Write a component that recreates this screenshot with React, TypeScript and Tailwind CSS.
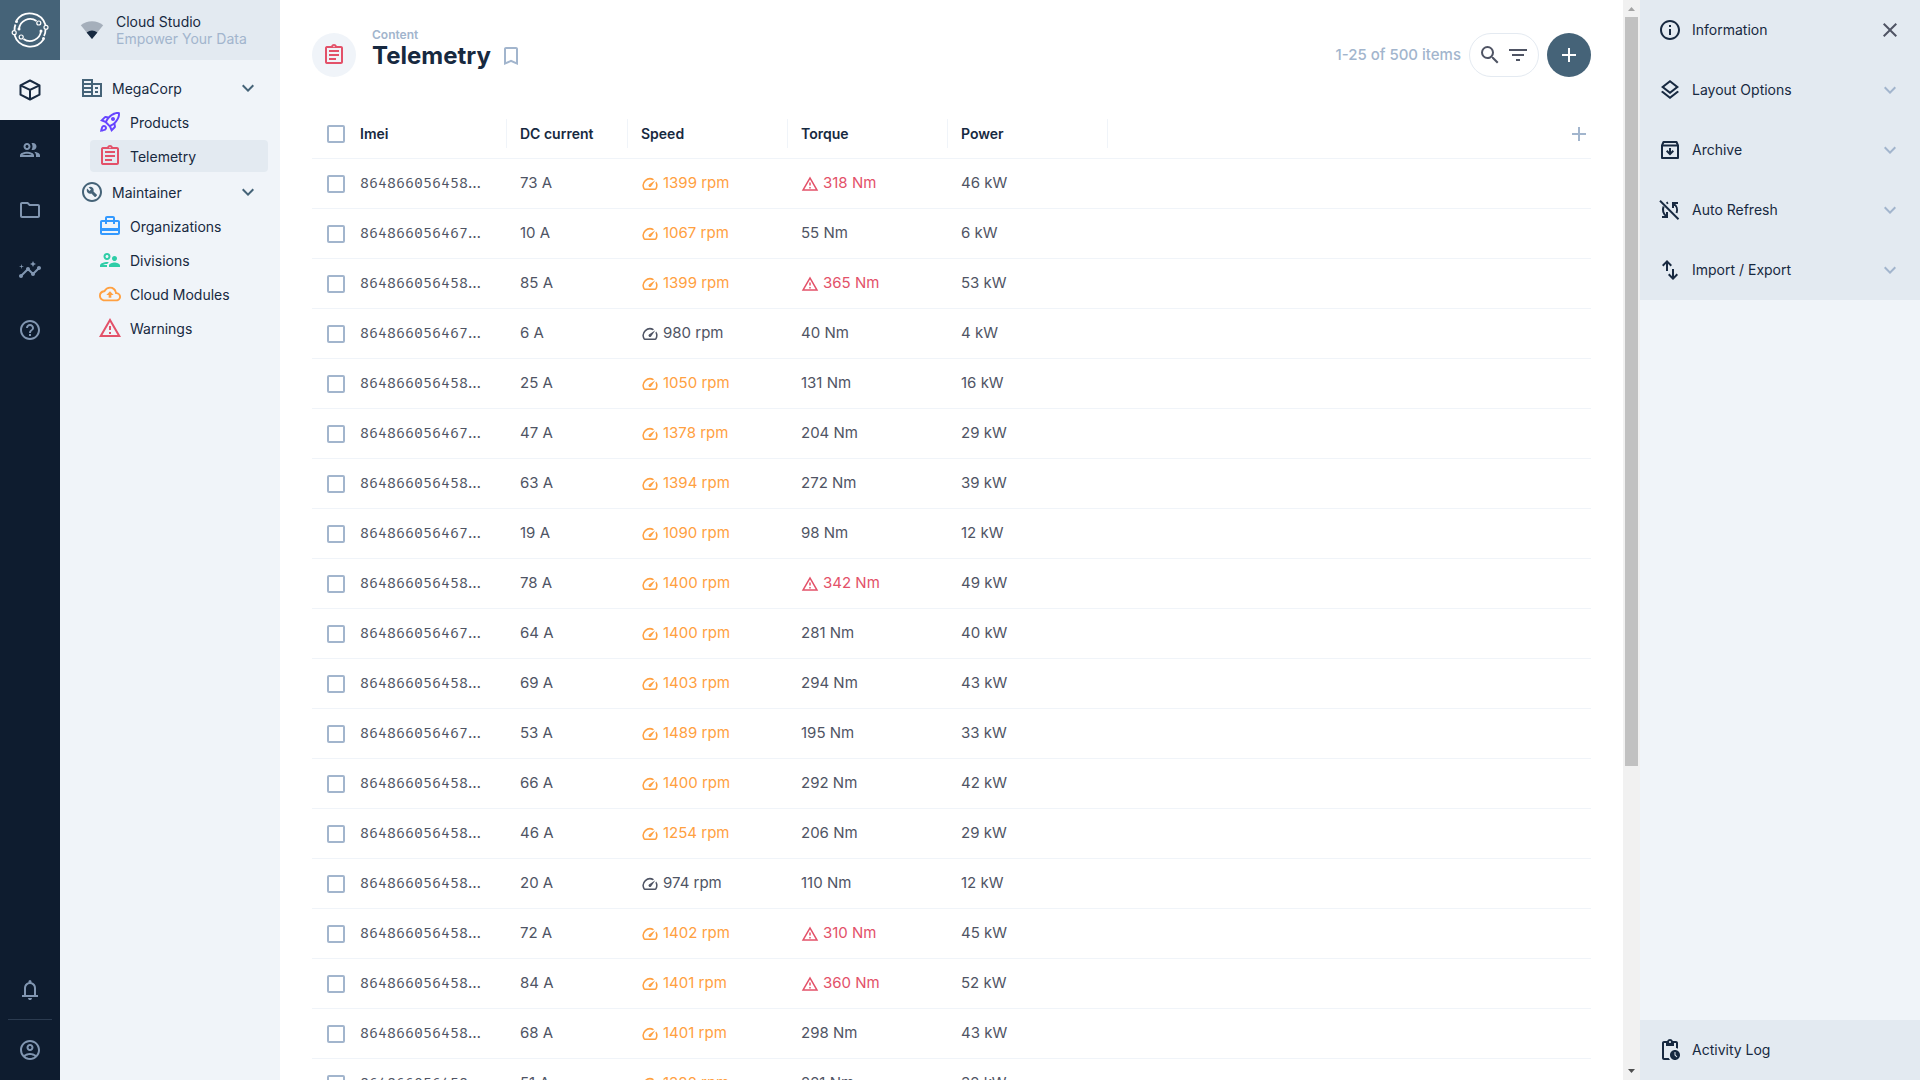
import type { ReactNode } from 'react'
import {
  MdAdd, MdBookmarkBorder, MdCardTravel, MdClose, MdExpandMore, MdFilterList, MdHelpOutline, MdInsights,
  MdOutlineAccountCircle, MdOutlineAssignment, MdOutlineBackup, MdOutlineBuildCircle,
  MdOutlineFolder, MdOutlineInfo, MdOutlineLayers, MdOutlinePendingActions, MdOutlinePeople,
  MdOutlineRocketLaunch, MdOutlineSpeed, MdOutlineSupervisorAccount, MdOutlineWarningAmber, MdSearch,
} from 'react-icons/md'
import { clsx } from 'clsx'

interface Reading {
  imei: string
  current: number
  speed: number
  torque: number
  power: number
}

const SPEED_LIMIT = 1000
const TORQUE_LIMIT = 300

const READINGS: Reading[] = [
  { imei: '864866056458', current: 73, speed: 1399, torque: 318, power: 46 },
  { imei: '864866056467', current: 10, speed: 1067, torque: 55, power: 6 },
  { imei: '864866056458', current: 85, speed: 1399, torque: 365, power: 53 },
  { imei: '864866056467', current: 6, speed: 980, torque: 40, power: 4 },
  { imei: '864866056458', current: 25, speed: 1050, torque: 131, power: 16 },
  { imei: '864866056467', current: 47, speed: 1378, torque: 204, power: 29 },
  { imei: '864866056458', current: 63, speed: 1394, torque: 272, power: 39 },
  { imei: '864866056467', current: 19, speed: 1090, torque: 98, power: 12 },
  { imei: '864866056458', current: 78, speed: 1400, torque: 342, power: 49 },
  { imei: '864866056467', current: 64, speed: 1400, torque: 281, power: 40 },
  { imei: '864866056458', current: 69, speed: 1403, torque: 294, power: 43 },
  { imei: '864866056467', current: 53, speed: 1489, torque: 195, power: 33 },
  { imei: '864866056458', current: 66, speed: 1400, torque: 292, power: 42 },
  { imei: '864866056458', current: 46, speed: 1254, torque: 206, power: 29 },
  { imei: '864866056458', current: 20, speed: 974, torque: 110, power: 12 },
  { imei: '864866056458', current: 72, speed: 1402, torque: 310, power: 45 },
  { imei: '864866056458', current: 84, speed: 1401, torque: 360, power: 52 },
  { imei: '864866056458', current: 68, speed: 1401, torque: 298, power: 43 },
  { imei: '864866056458', current: 51, speed: 1382, torque: 221, power: 32 },
]

function Glyph({ children }: { children: ReactNode }) {
  return (
    <svg viewBox="0 0 24 24" className="size-6 shrink-0" fill="none" stroke="currentColor" strokeWidth="2" aria-hidden="true">
      {children}
    </svg>
  )
}

function BoxIcon() {
  return (
    <Glyph>
      <path d="M12 2.500 21.500 7.300v9.400l-9.500 4.800-9.500-4.800V7.300z" strokeLinejoin="round" />
      <path d="M2.500 7.300 12 12l9.500-4.700M12 12v9.500" />
    </Glyph>
  )
}

// Left block has full-width floors, right block has an open wall with two windows.
function OfficeIcon() {
  return (
    <Glyph>
      <path d="M3 4h9v16H3zM12 8h9v12h-9M3 8h9M3 12h9M3 16h9" />
      <path d="M15 12h3M15 16h3" />
    </Glyph>
  )
}

function BellIcon() {
  return (
    <Glyph>
      <path
        fill="currentColor"
        stroke="none"
        d="M4 19v-2h2v-7q0-2.075 1.250-3.687T10.500 4.200v-.7q0-.625.438-1.062T12 2t1.063.438T13.500 3.500v.7q2 .5 3.250 2.113T18 10v7h2v2zm8 3q-.825 0-1.412-.587T10 20h4q0 .825-.587 1.413T12 22m-4-5h8v-7q0-1.650-1.175-2.825T12 6T9.175 7.175T8 10z"
      />
    </Glyph>
  )
}

function ArchiveIcon() {
  return (
    <Glyph>
      <path d="M4 7.500V20h16V7.500L18.500 4h-13z" strokeLinejoin="round" />
      <path d="M4 7.500h16" />
      <path d="M12 10v6M8.700 12.800l3.300 3.300 3.300-3.300" />
    </Glyph>
  )
}

function SyncOffIcon() {
  return (
    <Glyph>
      <path d="M2 2.800 20.500 21.300" />
      <path d="M20 5h-5v5M15.300 5.500A8 8 0 0 1 18.600 15M4 19h5v-5M8.700 18.500A8 8 0 0 1 5.600 8.500" />
      <path d="M8.500 5.300l1.500-.8" />
    </Glyph>
  )
}

function ImportExportIcon() {
  return (
    <Glyph>
      <path
        fill="currentColor"
        stroke="none"
        d="M8 13V5.825L5.425 8.400 4 7l5-5 5 5-1.425 1.400L10 5.825V13zm7 9l-5-5 1.425-1.400L14 18.175V11h2v7.175l2.575-2.575L20 17z"
      />
    </Glyph>
  )
}

function SignalIcon() {
  return (
    <svg viewBox="0 0 24 24" className="size-6 shrink-0" fill="#172940" aria-hidden="true">
      <path opacity="0.3" d="M12 21 .8 7.300C4 4.600 8 3.200 12 3.200s8 1.400 11.200 4.100z" />
      <path d="M12 21 6.600 14.500a9 9 0 0 1 10.800 0z" />
    </svg>
  )
}

function Logo() {
  return (
    <svg viewBox="0 0 40 40" className="size-10" fill="none" stroke="#fff" aria-hidden="true">
      <g strokeWidth="1.800">
        <path d="M6.500 10.500A16.300 16.300 0 0 1 35.500 15" />
        <path d="M33.500 29.500A16.300 16.300 0 0 1 4.500 25" />
        <path d="M9 19A11.200 11.200 0 0 1 26.500 11" />
        <path d="M31 21A11.200 11.200 0 0 1 13.500 29" />
        <path d="M4.500 20.500q0-4 1-6M35.500 19.500q0 4-1.500 6.500" />
      </g>
      <g strokeWidth="1.200" fill="#456378">
        <circle cx="28.800" cy="13" r="2" />
        <circle cx="36" cy="17.300" r="2" />
        <circle cx="11.200" cy="27" r="2" />
        <circle cx="4.200" cy="22.700" r="2" />
      </g>
      <g fill="#fff" stroke="none">
        <circle cx="6.500" cy="11.500" r="1.500" />
        <circle cx="33.500" cy="28.500" r="1.500" />
        <circle cx="9" cy="19" r="1.500" />
        <circle cx="31" cy="21" r="1.500" />
      </g>
    </svg>
  )
}

function RailButton({ label, active, children }: { label: string; active?: boolean; children: ReactNode }) {
  return (
    <button
      aria-label={label}
      className={clsx(
        'flex size-15 items-center justify-center',
        active ? 'bg-[#f0f4f9] text-[#172940]' : 'text-[#8196b1]'
      )}
    >
      {children}
    </button>
  )
}

function ModuleRail() {
  return (
    <aside className="flex w-15 shrink-0 flex-col bg-[#0e1c2f]">
      <a href="#home" aria-label="Home" className="flex size-15 items-center justify-center bg-[#456378]">
        <Logo />
      </a>
      <RailButton label="Content" active><BoxIcon /></RailButton>
      <RailButton label="Users"><MdOutlinePeople size={24} /></RailButton>
      <RailButton label="Files"><MdOutlineFolder size={24} /></RailButton>
      <RailButton label="Insights"><MdInsights size={24} /></RailButton>
      <RailButton label="Help"><MdHelpOutline size={24} /></RailButton>
      <div className="mt-auto">
        <RailButton label="Notifications"><BellIcon /></RailButton>
        <hr className="mx-2 -mt-px border-[#2b3b50]" />
        <RailButton label="Account"><MdOutlineAccountCircle size={24} /></RailButton>
      </div>
    </aside>
  )
}

function NavGroup({ icon, label, children }: { icon: ReactNode; label: string; children: ReactNode }) {
  return (
    <li>
      <button className="flex h-8 w-full items-center gap-2 px-2 text-left">
        <span className="text-[#456378]">{icon}</span>
        <span className="flex-1 pt-0.5">{label}</span>
        <MdExpandMore size={24} className="text-[#456378]" />
      </button>
      <ul className="mt-0.5 flex flex-col gap-0.5 pl-[18px]">{children}</ul>
    </li>
  )
}

function NavLink({ icon, label, active }: { icon: ReactNode; label: string; active?: boolean }) {
  return (
    <li>
      <a href={`#${label}`} className={clsx('flex h-8 items-center gap-2 rounded px-2', active && 'bg-[#e3eaf1]')}>
        <span className="flex w-6 justify-center">{icon}</span>
        <span className="pt-0.5">{label}</span>
      </a>
    </li>
  )
}

function Navigation() {
  return (
    <nav className="w-55 shrink-0 bg-[#f0f4f9] text-sm text-[#172940]">
      <div className="flex h-15 items-center gap-3 bg-[#e3eaf1] px-5">
        <SignalIcon />
        <div className="leading-[17px]">
          <div>Cloud Studio</div>
          <div className="text-[#a2b5cd]">Empower Your Data</div>
        </div>
      </div>
      <ul className="flex flex-col gap-1 p-3">
        <NavGroup icon={<OfficeIcon />} label="MegaCorp">
          <NavLink icon={<MdOutlineRocketLaunch size={24} className="text-[#6644ff]" />} label="Products" />
          <NavLink icon={<MdOutlineAssignment size={24} className="text-[#e35169]" />} label="Telemetry" active />
        </NavGroup>
        <NavGroup icon={<MdOutlineBuildCircle size={24} />} label="Maintainer">
          <NavLink icon={<MdCardTravel size={24} className="text-[#3399ff]" />} label="Organizations" />
          <NavLink icon={<MdOutlineSupervisorAccount size={24} className="text-[#2ecda7]" />} label="Divisions" />
          <NavLink icon={<MdOutlineBackup size={22} className="text-[#ffa041]" />} label="Cloud Modules" />
          <NavLink icon={<MdOutlineWarningAmber size={24} className="text-[#e35169]" />} label="Warnings" />
        </NavGroup>
      </ul>
    </nav>
  )
}

function PageHeader() {
  return (
    <header className="flex h-11 items-center">
      <div className="flex size-11 items-center justify-center rounded-full bg-[#f0f4f9] text-[#e35169]">
        <MdOutlineAssignment size={24} />
      </div>
      <div className="ml-4 pb-3">
        <div className="mb-px text-xs font-semibold leading-3 text-[#a2b5cd]">Content</div>
        <div className="flex items-center gap-2">
          <h1 className="text-2xl font-bold leading-7 text-[#172940]">Telemetry</h1>
          <button aria-label="Bookmark" className="text-[#a2b5cd]">
            <MdBookmarkBorder size={24} />
          </button>
        </div>
      </div>
      <span className="ml-auto text-[15px] font-medium text-[#a2b5cd]">1-25 of 500 items</span>
      <div className="ml-2 flex h-11 items-center gap-1 rounded-full border border-[#e4eaf1] px-2 text-[#4f5464]">
        <button aria-label="Search"><MdSearch size={24} /></button>
        <button aria-label="Filter"><MdFilterList size={24} /></button>
      </div>
      <button aria-label="Create item" className="ml-2 flex size-11 items-center justify-center rounded-full bg-[#456378] text-white">
        <MdAdd size={24} />
      </button>
    </header>
  )
}

function Checkbox({ label }: { label: string }) {
  return (
    <input
      type="checkbox"
      aria-label={label}
      className="block size-[18px] appearance-none rounded-xs border-2 border-[#a2b5cd] bg-white"
    />
  )
}

function ColumnHead({ label }: { label: string }) {
  return (
    <th scope="col" className="border-b border-[#f0f4f9] p-0 pr-px text-left font-semibold">
      <div className="flex h-[29px] items-center border-r border-[#f0f4f9] pl-3">{label}</div>
    </th>
  )
}

function Cell({ children }: { children?: ReactNode }) {
  return <td className="border-b border-[#f0f4f9] py-0 pl-3">{children}</td>
}

function TelemetryTable() {
  return (
    <table className="mt-8 w-full table-fixed border-separate border-spacing-0 text-[15px] text-[#4f5464]">
      <colgroup>
        <col className="w-9" />
        <col className="w-40" />
        <col className="w-[121px]" />
        <col className="w-40" />
        <col className="w-40" />
        <col className="w-40" />
        <col />
      </colgroup>
      <thead>
        <tr className="h-[50px] text-sm text-[#172940]">
          <th className="border-b border-[#f0f4f9] p-0 pl-[15px]"><Checkbox label="Select all" /></th>
          <ColumnHead label="Imei" />
          <ColumnHead label="DC current" />
          <ColumnHead label="Speed" />
          <ColumnHead label="Torque" />
          <ColumnHead label="Power" />
          <th className="border-b border-[#f0f4f9] p-0">
            <button aria-label="Add field" className="ml-auto block text-[#a2b5cd]">
              <MdAdd size={24} />
            </button>
          </th>
        </tr>
      </thead>
      <tbody>
        {READINGS.map((row, i) => (
          <tr key={i} className="h-[50px]">
            <td className="border-b border-[#f0f4f9] p-0 pl-[15px]"><Checkbox label={`Select row ${i + 1}`} /></td>
            <Cell>
              <span className="font-['Fira_Mono','DejaVu_Sans_Mono',monospace]">{row.imei}</span>…
            </Cell>
            <Cell>{row.current} A</Cell>
            <Cell>
              <div className={clsx('flex items-center gap-1', row.speed > SPEED_LIMIT && 'text-[#ffa041]')}>
                <MdOutlineSpeed size={18} />
                {row.speed} rpm
              </div>
            </Cell>
            <Cell>
              <div className={clsx('flex items-center gap-1', row.torque > TORQUE_LIMIT && 'text-[#e35169]')}>
                {row.torque > TORQUE_LIMIT && <MdOutlineWarningAmber size={18} />}
                {row.torque} Nm
              </div>
            </Cell>
            <Cell>{row.power} kW</Cell>
            <Cell />
          </tr>
        ))}
      </tbody>
    </table>
  )
}

function ScrollTrack() {
  return (
    <div className="flex w-[17px] shrink-0 flex-col items-center bg-[#f1f1f1]">
      <svg viewBox="0 0 17 17" className="h-[17px] w-full shrink-0" aria-hidden="true">
        <path d="M5 11h7L8.500 7z" fill="#a3a3a3" />
      </svg>
      <div className="flex min-h-0 w-[13px] flex-1 flex-col">
        <div className="h-[71.6%] bg-[#c1c1c1]" />
      </div>
      <svg viewBox="0 0 17 17" className="h-[17px] w-full shrink-0" aria-hidden="true">
        <path d="M5 6h7l-3.500 4z" fill="#505050" />
      </svg>
    </div>
  )
}

function DetailButton({ icon, label }: { icon: ReactNode; label: string }) {
  return (
    <button className="flex h-15 w-full items-center gap-2.5 px-[18px] text-left">
      {icon}
      <span className="flex-1">{label}</span>
      <MdExpandMore size={24} className="text-[#a2b5cd]" />
    </button>
  )
}

function DetailSidebar() {
  return (
    <aside className="flex w-70 shrink-0 flex-col justify-between bg-[#f0f4f9] text-sm text-[#172940]">
      <div className="bg-[#e3eaf1]">
        <div className="flex h-15 items-center gap-2.5 px-[18px]">
          <MdOutlineInfo size={24} />
          <span className="flex-1">Information</span>
          <button aria-label="Close sidebar" className="text-[#4f5464]">
            <MdClose size={24} />
          </button>
        </div>
        <DetailButton icon={<MdOutlineLayers size={24} />} label="Layout Options" />
        <DetailButton icon={<ArchiveIcon />} label="Archive" />
        <DetailButton icon={<SyncOffIcon />} label="Auto Refresh" />
        <DetailButton icon={<ImportExportIcon />} label="Import / Export" />
      </div>
      <button className="flex h-15 items-center gap-2.5 bg-[#e3eaf1] px-[18px]">
        <MdOutlinePendingActions size={24} />
        Activity Log
      </button>
    </aside>
  )
}

export default function App() {
  return (
    <div className="flex h-screen overflow-hidden bg-white font-['Inter',sans-serif]">
      <ModuleRail />
      <Navigation />
      <main className="min-w-0 flex-1 overflow-hidden px-8 pt-[33px]">
        <PageHeader />
        <TelemetryTable />
      </main>
      <ScrollTrack />
      <DetailSidebar />
    </div>
  )
}
